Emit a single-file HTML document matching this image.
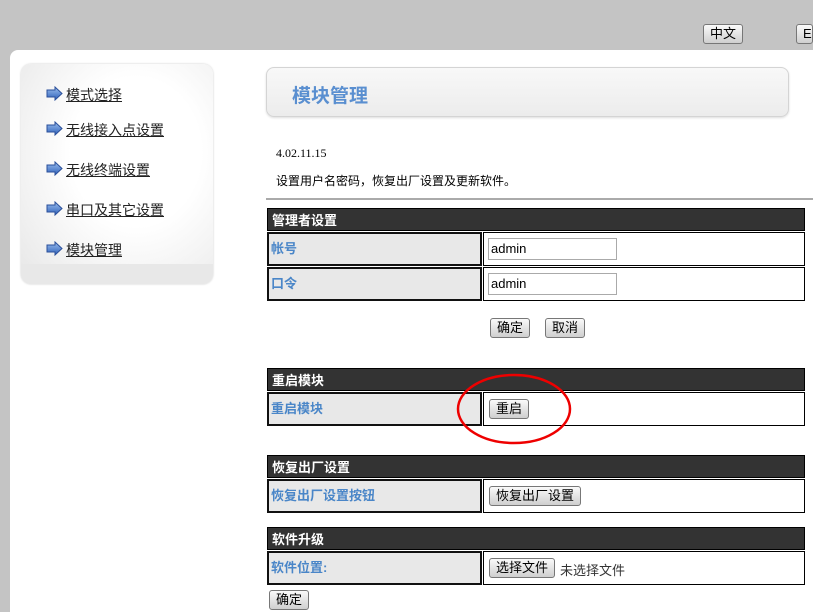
<!DOCTYPE html>
<html><head><meta charset="utf-8"><style>
*{margin:0;padding:0;box-sizing:border-box}
html,body{width:813px;height:612px;overflow:hidden}
body{position:relative;background:#c4c4c4;font-family:"Liberation Sans","Noto Sans CJK SC",sans-serif;font-size:13px;color:#000}
.a{position:absolute}
.btn{position:absolute;border:1px solid #777;border-radius:3px;background:linear-gradient(#fafafa,#e0e0e0 60%,#cfcfcf);font-size:13px;line-height:17px;padding:0 6px;height:20px}
.hdr{position:absolute;left:267px;width:538px;height:23px;background:#333;color:#fff;font-weight:bold;font-size:13px;line-height:23px;padding-left:4px;border:1px solid #000}
.lab{position:absolute;left:267px;width:215px;height:34px;background:#e8e8e8;border:2px solid #111;color:#4a86c8;font-weight:bold;line-height:30px;padding-left:2px}
.val{position:absolute;left:483px;width:322px;height:34px;background:#fff;border:1px solid #000}
.inp{position:absolute;left:488px;width:129px;height:22px;border:1px solid #aaa;background:#fff;font-size:13px;line-height:20px;padding-left:2px}
.nav{position:absolute;left:46px;font-size:14px;text-decoration:underline;color:#222;padding-left:20px}
.arr{position:absolute;left:0;top:1px}
</style></head><body>
<div class="btn" style="left:703px;top:24px;height:20px">中文</div>
<div class="btn" style="left:796px;top:24px;height:20px;width:17px;overflow:hidden">En</div>
<div class="a" style="left:10px;top:50px;width:803px;height:562px;background:#fff;border-radius:8px 0 0 0"></div>
<div class="a" style="left:21px;top:64px;width:192px;height:220px;border-radius:10px;background:radial-gradient(ellipse at 60% 40%,#fff 40%,#e6e6e6 100%);box-shadow:0 0 2px #ccc"></div>
<div class="a" style="left:21px;top:264px;width:192px;height:20px;background:#e8e8e8;border-radius:0 0 10px 10px"></div>
<svg width="0" height="0" style="position:absolute"><defs><linearGradient id="g" x1="0" y1="0" x2="0" y2="1"><stop offset="0" stop-color="#9cc0f0"/><stop offset="1" stop-color="#2e5fb8"/></linearGradient></defs></svg>
<div class="nav" style="top:85px"><svg class="arr" width="17" height="15"><path d="M1 4h8V1l7 6.5-7 6.5v-3H1z" fill="url(#g)" stroke="#2a4f9a"/></svg>模式选择</div>
<div class="nav" style="top:120px"><svg class="arr" width="17" height="15"><path d="M1 4h8V1l7 6.5-7 6.5v-3H1z" fill="url(#g)" stroke="#2a4f9a"/></svg>无线接入点设置</div>
<div class="nav" style="top:160px"><svg class="arr" width="17" height="15"><path d="M1 4h8V1l7 6.5-7 6.5v-3H1z" fill="url(#g)" stroke="#2a4f9a"/></svg>无线终端设置</div>
<div class="nav" style="top:200px"><svg class="arr" width="17" height="15"><path d="M1 4h8V1l7 6.5-7 6.5v-3H1z" fill="url(#g)" stroke="#2a4f9a"/></svg>串口及其它设置</div>
<div class="nav" style="top:240px"><svg class="arr" width="17" height="15"><path d="M1 4h8V1l7 6.5-7 6.5v-3H1z" fill="url(#g)" stroke="#2a4f9a"/></svg>模块管理</div>
<div class="a" style="left:266px;top:67px;width:523px;height:50px;border:1px solid #d4d4d4;border-radius:8px;background:linear-gradient(#f8f8f8,#ececec);box-shadow:0 1px 2px #ddd"></div>
<div class="a" style="left:292px;top:81px;font-size:19px;font-weight:bold;color:#5a8fd0">模块管理</div>
<div class="a" style="left:276px;top:146px;font-family:'Liberation Serif',serif;font-size:12px">4.02.11.15</div>
<div class="a" style="left:276px;top:172px;font-size:12px">设置用户名密码，恢复出厂设置及更新软件。</div>
<div class="a" style="left:266px;top:198px;width:547px;height:2px;background:#aaa"></div>

<div class="hdr" style="top:208px">管理者设置</div>
<div class="lab" style="top:232px">帐号</div><div class="val" style="top:232px"></div>
<div class="inp" style="top:238px">admin</div>
<div class="lab" style="top:267px">口令</div><div class="val" style="top:267px"></div>
<div class="inp" style="top:273px">admin</div>
<div class="btn" style="left:490px;top:318px">确定</div>
<div class="btn" style="left:545px;top:318px">取消</div>

<div class="hdr" style="top:368px">重启模块</div>
<div class="lab" style="top:392px">重启模块</div><div class="val" style="top:392px"></div>
<div class="btn" style="left:489px;top:399px">重启</div>

<div class="hdr" style="top:455px">恢复出厂设置</div>
<div class="lab" style="top:479px">恢复出厂设置按钮</div><div class="val" style="top:479px"></div>
<div class="btn" style="left:489px;top:486px">恢复出厂设置</div>

<div class="hdr" style="top:527px">软件升级</div>
<div class="lab" style="top:551px">软件位置:</div><div class="val" style="top:551px"></div>
<div class="btn" style="left:489px;top:558px">选择文件</div>
<div class="a" style="left:560px;top:560px;color:#333">未选择文件</div>
<div class="btn" style="left:269px;top:590px">确定</div>

<svg class="a" style="left:0;top:0" width="813" height="612"><ellipse cx="514" cy="409" rx="56" ry="34" fill="none" stroke="#e00" stroke-width="2.5"/></svg>
</body></html>
